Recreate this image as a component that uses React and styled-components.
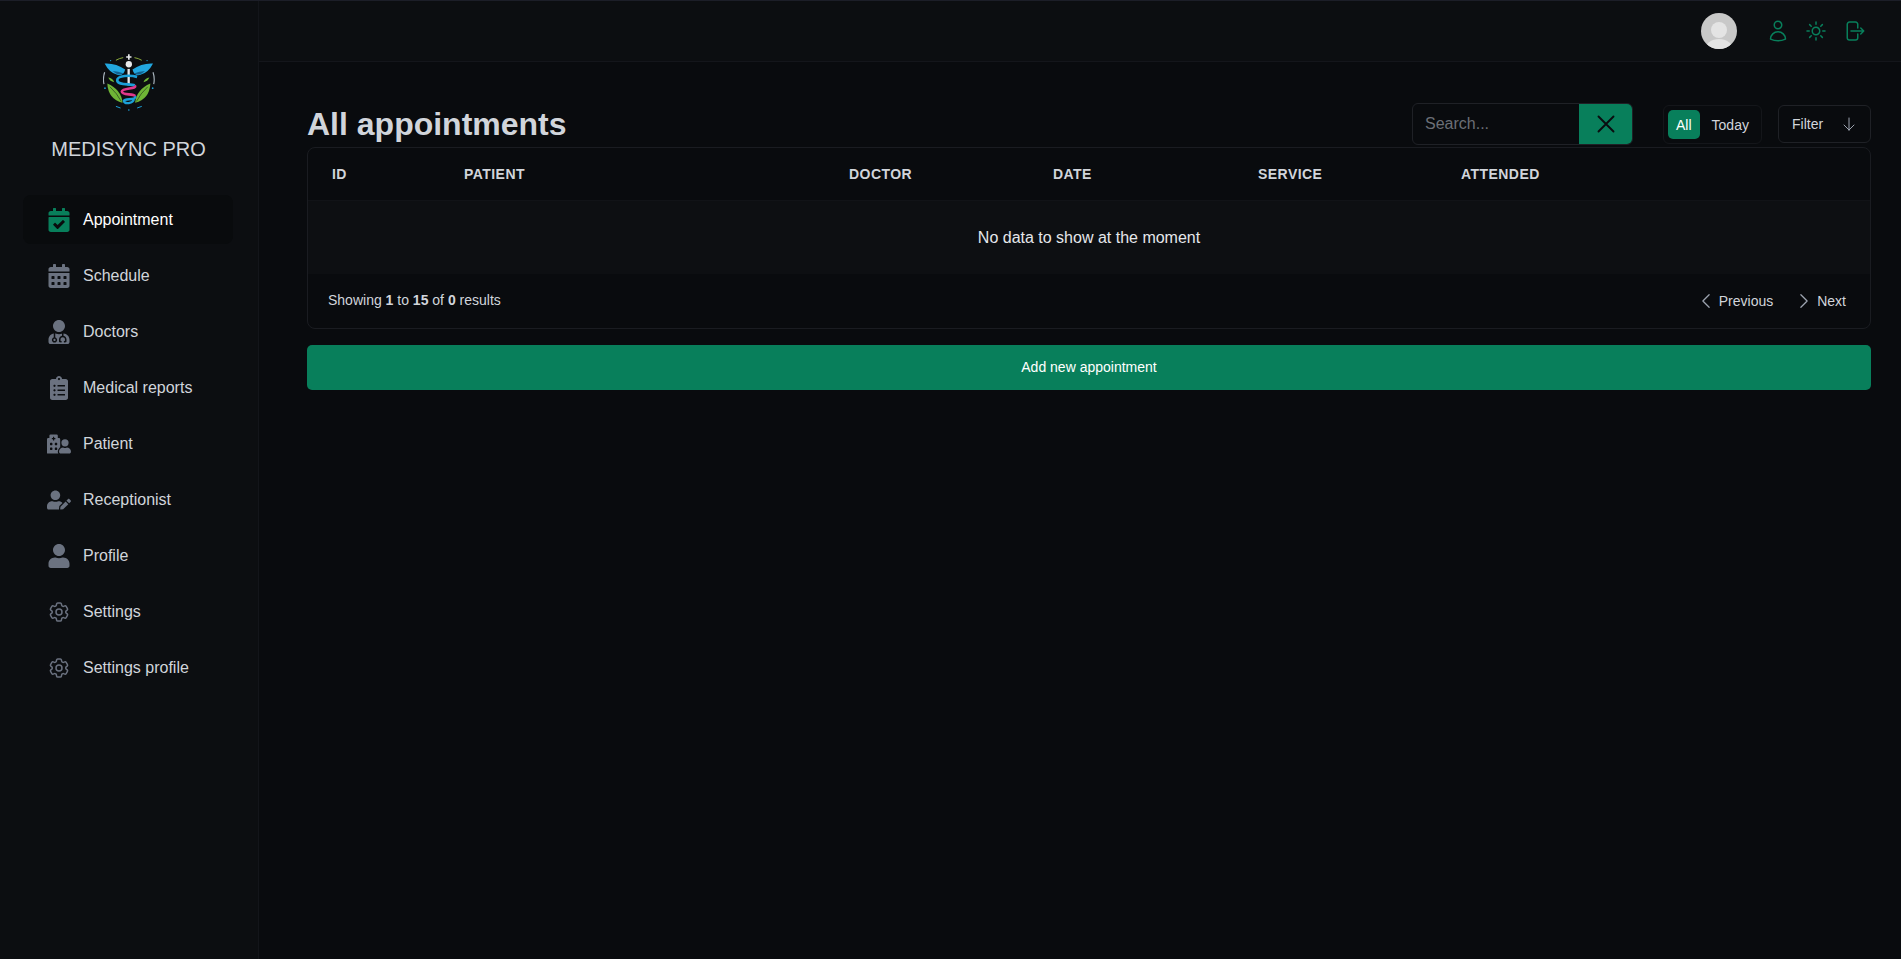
import React from "react";
import styled, { createGlobalStyle } from "styled-components";
import { FaCalendarCheck, FaCalendarAlt, FaUserMd, FaClipboardList, FaHospitalUser, FaUserEdit, FaUser } from "react-icons/fa";
import { HiOutlineCog6Tooth, HiOutlineUser, HiOutlineSun, HiOutlineArrowRightOnRectangle, HiOutlineChevronLeft, HiOutlineChevronRight, HiOutlineXMark, HiOutlineArrowDown } from "react-icons/hi2";

const Global = createGlobalStyle`
  html, body { margin: 0; padding: 0; height: 100%; background: #090b0e; }
  body { font-family: "Liberation Sans", Arial, sans-serif; color: #e5e7eb; }
  * { box-sizing: border-box; }
`;
const Page = styled.div`
  display: flex; height: 959px; overflow: hidden; background: #090b0e;
  border-top: 1px solid #1c1e28;
`;
const Sidebar = styled.aside`
  width: 259px; flex: none; background: #0c0e11; border-right: 1px solid #13151a;
  display: flex; flex-direction: column; align-items: center; padding-top: 51px;
`;
const Brand = styled.div`
  font-size: 20px; line-height: 28px; color: #d1d5db; margin-top: 22px; margin-left: -1px;
`;
const Nav = styled.nav`
  display: flex; flex-direction: column; gap: 7px; width: 100%; padding: 0 25px 0 23px; margin-top: 32px;
`;
const NavItem = styled.div`
  display: flex; align-items: center; height: 49px; border-radius: 8px; padding-left: 25px;
  font-size: 16px; color: ${p => (p.$active ? "#ffffff" : "#d1d5db")};
  background: ${p => (p.$active ? "#090b0d" : "transparent")};
`;
const IconSlot = styled.span`
  width: 24px; height: 24px; display: flex; align-items: center; justify-content: center; flex: none;
  margin-right: 12px; margin-left: -1px; color: ${p => (p.$active ? "#087f5b" : "#6b7280")};
`;
const Main = styled.div`flex: 1; min-width: 0; display: flex; flex-direction: column;`;
const Topbar = styled.header`
  height: 61px; flex: none; background: #0c0e11; border-bottom: 1px solid #14161b;
  display: flex; align-items: center; justify-content: flex-end; padding-right: 35px;
`;
const Avatar = styled.div`
  width: 36px; height: 36px; border-radius: 50%; background: #c8c8c8; position: relative; overflow: hidden; margin-right: 29px;
  &::before { content: ""; position: absolute; left: 10px; top: 9px; width: 16px; height: 16px; border-radius: 50%; background: #e4e4e4; }
  &::after { content: ""; position: absolute; left: 4px; top: 26px; width: 28px; height: 22px; border-radius: 50%; background: #e4e4e4; }
`;
const TopIcons = styled.div`display: flex; gap: 14px; color: #087f5b; align-items: center;`;
const Content = styled.main`padding: 40px 30px 0 48px;`;
const HeadRow = styled.div`display: flex; align-items: flex-end; justify-content: space-between; height: 44px;`;
const Title = styled.h1`margin: 0; padding-bottom: 4px; font-size: 32px; line-height: 36px; font-weight: 700; color: #d1d5db;`;
const Tools = styled.div`display: flex; align-items: flex-start; height: 42px;`;
const SearchBox = styled.div`
  width: 221px; height: 42px; display: flex; border: 1px solid #1f2126; border-radius: 6px; overflow: hidden; margin-right: 30px; margin-top: -1px;
`;
const SearchField = styled.div`flex: 1; padding-left: 12px; font-size: 16px; line-height: 39px; color: #6b6f76;`;
const SearchBtn = styled.div`width: 54px; background: #087f5b; color: #0a0c0f; margin: -1px -1px -1px 0; display: flex; align-items: center; justify-content: center;`;
const Segment = styled.div`
  width: 99px; height: 39px; border: 1px solid #14161a; border-radius: 6px; display: flex; align-items: center; padding: 0 4px; margin-right: 16px; margin-top: 1px; font-size: 14px;
`;
const SegBtn = styled.div`
  height: 29px; padding: 0 ${p => (p.$active ? "8px" : "12px")}; border-radius: 5px; display: flex; align-items: center;
  background: ${p => (p.$active ? "#087f5b" : "transparent")}; color: ${p => (p.$active ? "#fff" : "#d1d5db")}; font-weight: ${p => (p.$active ? 500 : 400)};
`;
const FilterBtn = styled.div`
  width: 93px; height: 38px; border: 1px solid #1f2126; border-radius: 6px; margin-top: 1px; display: flex; align-items: center; justify-content: space-between; padding: 0 13px; font-size: 14px; color: #d1d5db;
  svg { color: #9ca3af; }
`;
const Card = styled.section`border: 1px solid #1a1c21; border-radius: 8px; overflow: hidden; height: 182px; margin-top: 1px;`;
const HeaderRow = styled.div`
  display: grid; grid-template-columns: 132px 385px 204px 205px 203px 1fr; height: 53px; align-items: center; border-bottom: 1px solid #111317;
`;
const Th = styled.div`padding-left: 24px; font-size: 14px; font-weight: 700; letter-spacing: 0.45px; color: #d1d5db; text-transform: uppercase;`;
const EmptyRow = styled.div`height: 73px; background: #0d0f12; display: flex; align-items: center; justify-content: center; font-size: 16px; color: #e5e7eb;`;
const Footer = styled.div`height: 54px; display: flex; align-items: center; justify-content: space-between; padding: 0 24px 0 20px;`;
const Showing = styled.div`font-size: 14px; color: #d1d5db; margin-top: -3px; b { font-weight: 700; }`;
const Pager = styled.div`display: flex; gap: 21px; font-size: 14px; color: #d1d5db; margin-top: -1px;`;
const PageLink = styled.div`display: flex; align-items: center; gap: 3px; svg { color: #9ca3af; }`;
const AddBtn = styled.div`
  height: 45px; margin-top: 16px; background: #087f5b; border-radius: 5px; color: #fff; font-size: 14px; padding-bottom: 1px; display: flex; align-items: center; justify-content: center;
`;
const LogoWrap = styled.div`height: 60px; display: flex; margin-left: -1px; margin-top: 1px;`;

const LogoHalf = () => (
  <>
    <path d="M108 72Q118 66 130 64" stroke="#8aa83a" strokeWidth="3" />
    <circle cx="92" cy="73" r="2" fill="#1b9fd8" />
    <path d="M74 82Q108 80 136 100Q130 122 112 116Q88 110 74 82Z" fill="#22a7e0" />
    <path d="M98 104Q115 104 132 112Q118 118 108 112Z" fill="#12608f" />
    <path d="M74 108Q68 126 72 144" stroke="#a9b4bd" strokeWidth="3.5" />
    <circle cx="75" cy="156" r="2.6" fill="#1b9fd8" />
    <path d="M85 124Q98 126 103 138Q90 136 85 124Z" fill="#6fb536" />
    <path d="M82 142Q124 160 128 200Q85 190 82 142Z" fill="#6fb536" />
    <path d="M90 152Q112 172 124 196" stroke="#0d0f12" strokeWidth="1.5" />
    <path d="M108 211L122 216" stroke="#1b9fd8" strokeWidth="3" />
  </>
);
const Logo = () => (
  <svg width="52" height="58" viewBox="70 50 155 175" fill="none">
    <path d="M147 54v16M139 62h16" stroke="#e5e7eb" strokeWidth="5" />
    <circle cx="147" cy="84" r="9.5" fill="#e8eaec" />
    <LogoHalf />
    <g transform="matrix(-1 0 0 1 294 0)"><LogoHalf /></g>
    <rect x="143" y="98" width="7" height="50" fill="#e8eaec" />
    <path d="M172 122C150 116 112 118 112 132C112 148 150 142 165 148" stroke="#1b9fd8" strokeWidth="8" />
    <path d="M165 148C174 160 128 154 126 166C126 178 160 172 166 180" stroke="#e0388a" strokeWidth="8" />
    <path d="M166 180C170 194 135 186 132 194C134 206 160 202 162 190" stroke="#1b9fd8" strokeWidth="7" />
    <circle cx="147" cy="222" r="2.5" fill="#1b9fd8" />
  </svg>
);

const items = [
  ["Appointment", <FaCalendarCheck size={24} />, true],
  ["Schedule", <FaCalendarAlt size={24} />],
  ["Doctors", <FaUserMd size={24} />],
  ["Medical reports", <FaClipboardList size={24} />],
  ["Patient", <FaHospitalUser size={24} />],
  ["Receptionist", <FaUserEdit size={24} />],
  ["Profile", <FaUser size={24} />],
  ["Settings", <HiOutlineCog6Tooth size={24} />],
  ["Settings profile", <HiOutlineCog6Tooth size={24} />],
];
const cols = ["ID", "Patient", "Doctor", "Date", "Service", "Attended"];

export default function App() {
  return (
    <Page>
      <Global />
      <Sidebar>
        <LogoWrap><Logo /></LogoWrap>
        <Brand>MEDISYNC PRO</Brand>
        <Nav>
          {items.map(([label, icon, active]) => (
            <NavItem key={label} $active={active}>
              <IconSlot $active={active}>{icon}</IconSlot>
              {label}
            </NavItem>
          ))}
        </Nav>
      </Sidebar>
      <Main>
        <Topbar>
          <Avatar />
          <TopIcons>
            <HiOutlineUser size={24} />
            <HiOutlineSun size={24} />
            <HiOutlineArrowRightOnRectangle size={24} />
          </TopIcons>
        </Topbar>
        <Content>
          <HeadRow>
            <Title>All appointments</Title>
            <Tools>
              <SearchBox>
                <SearchField>Search...</SearchField>
                <SearchBtn><HiOutlineXMark size={30} /></SearchBtn>
              </SearchBox>
              <Segment>
                <SegBtn $active>All</SegBtn>
                <SegBtn>Today</SegBtn>
              </Segment>
              <FilterBtn>Filter <HiOutlineArrowDown size={16} /></FilterBtn>
            </Tools>
          </HeadRow>
          <Card>
            <HeaderRow>{cols.map(c => <Th key={c}>{c}</Th>)}</HeaderRow>
            <EmptyRow>No data to show at the moment</EmptyRow>
            <Footer>
              <Showing>Showing <b>1</b> to <b>15</b> of <b>0</b> results</Showing>
              <Pager>
                <PageLink><HiOutlineChevronLeft size={20} /> Previous</PageLink>
                <PageLink><HiOutlineChevronRight size={20} /> Next</PageLink>
              </Pager>
            </Footer>
          </Card>
          <AddBtn>Add new appointment</AddBtn>
        </Content>
      </Main>
    </Page>
  );
}
